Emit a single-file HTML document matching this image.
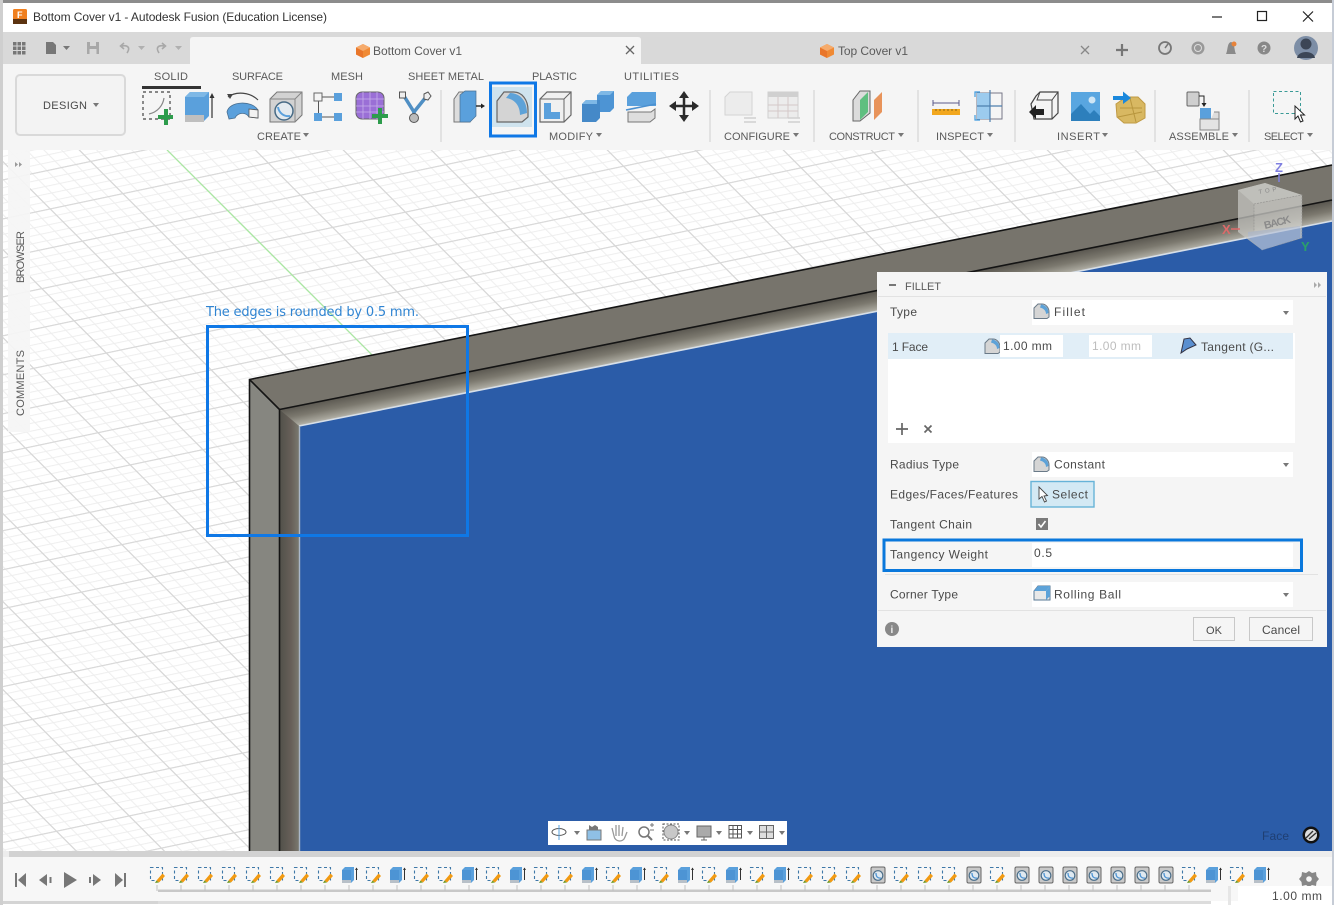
<!DOCTYPE html>
<html lang="en"><head><meta charset="utf-8"><title>Bottom Cover v1</title>
<style>
html,body{margin:0;padding:0;background:#fff;width:1334px;height:905px;overflow:hidden}
svg{display:block;font-family:"Liberation Sans",sans-serif;font-size:12px}
text{fill:#555}
.l{fill:#4a4a4a}
.t{fill:#5a5a5a}
.u{fill:#5a5a5a;font-size:11px}
</style></head><body>
<svg xmlns="http://www.w3.org/2000/svg" width="1334" height="905" viewBox="0 0 1334 905">
<defs>
<pattern id="gMaj" width="100" height="100" patternUnits="userSpaceOnUse" patternTransform="matrix(.727 -.153 .322 .322 121.7 193.3)">
<rect x="0" y="0" width="2" height="100" fill="#d8d8d8"/><rect x="0" y="0" width="100" height="3" fill="#d8d8d8"/>
</pattern>
<pattern id="gMin" width="20" height="20" patternUnits="userSpaceOnUse" patternTransform="matrix(.727 -.153 .322 .322 121.7 193.3)">
<rect x="0" y="0" width="1.6" height="20" fill="#eeeeee"/><rect x="0" y="0" width="20" height="2.6" fill="#eeeeee"/>
</pattern>
<linearGradient id="topF" gradientUnits="userSpaceOnUse" x1="279" y1="409" x2="283" y2="429.2"><stop offset="0" stop-color="#5a5750"/><stop offset=".5" stop-color="#7c796f"/><stop offset=".85" stop-color="#a3a197"/><stop offset="1" stop-color="#b9b7ae"/></linearGradient>
<linearGradient id="leftF" x1="0" y1="0" x2="1" y2="0"><stop offset="0" stop-color="#505049"/><stop offset=".6" stop-color="#675f58"/><stop offset="1" stop-color="#7a796f"/></linearGradient>
<symbol id="s" viewBox="0 0 18 20" width="18" height="20">
<rect x="1.500" y="2.500" width="12" height="13" fill="none" stroke="#3f78a8" stroke-width="1.100" stroke-dasharray="3 2.500"/>
<path d="M7.500 15.500 L13.500 8.500 L16 11 L10 17.500 Z" fill="#f29a12"/><path d="M6 18 L7.500 15.500 L10 17.500 Z" fill="#6f9a28"/>
</symbol>
<symbol id="e" viewBox="0 0 18 20" width="18" height="20">
<path d="M1 5 L4 2 H13 V15 L10 18 H1 Z" fill="#5aa0dc"/><path d="M1 15 H10 V18 H1Z" fill="#b8c0c8"/><path d="M1 5 H10 V15 H1Z" fill="#4d94d4"/><path d="M15.500 3 V15" stroke="#333" stroke-width="1"/><path d="M14 5 L15.500 2.500 L17 5Z" fill="#333"/>
</symbol>
<symbol id="r" viewBox="0 0 18 20" width="18" height="20">
<rect x="2" y="2" width="14" height="16" rx="1.500" fill="#c9c9c9" stroke="#666"/><circle cx="9" cy="10.500" r="4.800" fill="#dfe9f0" stroke="#4c6f8a" stroke-width="1.200"/><path d="M7 8 C7 12 9 13.500 12 13" fill="none" stroke="#4d94d4" stroke-width="1.300"/>
</symbol>
<symbol id="cube" viewBox="0 0 16 16" width="16" height="16">
<path d="M8 1 L15 4.500 V11.500 L8 15 L1 11.500 V4.500Z" fill="#f08a34"/><path d="M1 4.500 L8 8 V15 L1 11.500Z" fill="#e9762a"/><path d="M8 1 L15 4.500 L8 8 L1 4.500Z" fill="#f6ab6c"/>
</symbol>
<symbol id="fi" viewBox="0 0 17 17" width="17" height="17">
<path d="M1 15.500 V5 L5 1 H9 C13 1 16 5 16 9 V14 L14 15.500Z" fill="#d5d5d5" stroke="#6a7a88"/>
<path d="M8 1.500 C12.500 2 15.500 5 15.500 10 L13 11 C13 8 11 5.500 7 4.500Z" fill="#5da2d8"/>
</symbol>
</defs>

<!-- outer frame -->
<rect width="1334" height="905" fill="#fff"/>
<rect x="0" y="0" width="1334" height="3" fill="#8c8c8c"/>
<rect x="0" y="0" width="3" height="905" fill="#cfcfcf"/>
<rect x="1332" y="0" width="2" height="905" fill="#c6ccd6"/>

<!-- canvas grid -->
<rect x="3" y="150" width="1329" height="701" fill="#fff"/>
<rect x="3" y="150" width="1329" height="701" fill="url(#gMin)"/>
<rect x="3" y="150" width="1329" height="701" fill="url(#gMaj)"/>
<path d="M167 150 L372 355" stroke="#a8eaa0" stroke-width="1.200"/>

<!-- body -->
<path d="M250 380 L1332 165 V851 H250Z" fill="#77746c"/>
<path d="M250 380 L279 409 V851 H250Z" fill="#868680"/>
<path d="M279 409 L1332 200 V221 L299 426Z" fill="url(#topF)"/>
<path d="M279 409 L299 426 V851 H279Z" fill="url(#leftF)"/>
<path d="M299 426 L1332 221 V851 H299Z" fill="#2b5ca8"/>
<path d="M299 426 L1332 221" stroke="#d7dfe8" stroke-width="1.600" fill="none"/>
<path d="M299.500 426 V851" stroke="#aab7c8" stroke-width="1.400" fill="none"/>
<path d="M249.500 851 V379.500 L1332 165 M250 380 L279.500 409.500 V851 M279.500 409.500 L1332 200" stroke="#141414" stroke-width="1.600" fill="none"/>

<!-- annotation -->
<text x="206" y="316" font-size="14" textLength="213" style="fill:#2f84d2;font-family:'DejaVu Sans',sans-serif;font-size:13px">The edges is rounded by 0.5 mm.</text>
<rect x="207.500" y="326.500" width="260" height="209" fill="none" stroke="#0f78e6" stroke-width="3"/>

<!-- left panel -->
<rect x="8" y="150" width="22" height="282" fill="#f5f5f5" opacity=".92"/>
<path d="M15 162 L18 164.500 L15 167Z M19 162 L22 164.500 L19 167Z" fill="#9a9a9a"/>
<text transform="translate(24,283) rotate(-90)" textLength="52" class="u" x="0" y="0">BROWSER</text>
<text transform="translate(24,416) rotate(-90)" textLength="66" class="u" x="0" y="0">COMMENTS</text>

<!-- viewcube -->
<g opacity=".72">
<path d="M1238 190 L1265 183 L1302 195 V238 L1262 250 L1238 232Z" fill="#c8c8c4"/>
<path d="M1238 190 L1265 183 L1302 195 L1254 204Z" fill="#dcdcd8"/>
<path d="M1254 204 L1302 195 V238 L1262 250 L1254 240Z" fill="#d2d2ce" stroke="#999" stroke-width=".6" stroke-dasharray="2 1"/>
<path d="M1248 237 L1262 250 L1300 238 L1300 226 L1248 232Z" fill="#b9c4d8"/>
</g>
<text transform="translate(1265,229) rotate(-14)" textLength="27" x="0" y="0" style="fill:#8a8a8a;font-size:10.500px;font-weight:bold">BACK</text>
<text transform="translate(1259,194) rotate(-10)" font-size="6" textLength="18" x="0" y="0" style="fill:#888;font-size:6px">TOP</text>
<text x="1275" y="172" style="fill:#7f7fe0;font-weight:bold;font-size:13px">Z</text>
<text x="1222" y="234" style="fill:#dc6a6a;font-weight:bold;font-size:13px">X</text>
<path d="M1231 229 H1240" stroke="#dc6a6a" stroke-width="1.500"/>
<text x="1301" y="251" style="fill:#2aa06a;font-weight:bold;font-size:13px">Y</text>
<path d="M1279 173 V182" stroke="#7f7fe0" stroke-width="1.500"/>

<!-- title bar -->
<rect x="3" y="3" width="1329" height="29" fill="#fff"/>
<rect x="13" y="9" width="14" height="15" rx="1.500" fill="#f07f1e"/>
<rect x="13" y="19" width="14" height="5" fill="#5c3310"/>
<text x="17" y="18" style="fill:#fff;font-weight:bold;font-size:9px">F</text>
<text x="33" y="21" textLength="294" style="fill:#333">Bottom Cover v1 - Autodesk Fusion (Education License)</text>
<path d="M1212 17 H1222" stroke="#222" stroke-width="1.200"/>
<rect x="1257.500" y="11.500" width="9" height="9" fill="none" stroke="#222" stroke-width="1.200"/>
<path d="M1303 11.500 L1313 21.500 M1313 11.500 L1303 21.500" stroke="#222" stroke-width="1.200"/>

<!-- tab bar -->
<rect x="3" y="32" width="1329" height="32" fill="#d9d9d9"/>
<path d="M190 64 V40 Q190 37 193 37 H638 Q641 37 641 40 V64Z" fill="#f5f5f5"/>
<g fill="#777"><rect x="13" y="42" width="3.500" height="3.500"/><rect x="17.500" y="42" width="3.500" height="3.500"/><rect x="22" y="42" width="3.500" height="3.500"/><rect x="13" y="46.500" width="3.500" height="3.500"/><rect x="17.500" y="46.500" width="3.500" height="3.500"/><rect x="22" y="46.500" width="3.500" height="3.500"/><rect x="13" y="51" width="3.500" height="3.500"/><rect x="17.500" y="51" width="3.500" height="3.500"/><rect x="22" y="51" width="3.500" height="3.500"/></g>
<path d="M46 42 H53 L56 45 V54 H46Z" fill="#777"/><path d="M63 46 H70 L66.500 50Z" fill="#777"/>
<path d="M87 42 H99 V54 H87Z" fill="#a8a8a8"/><rect x="90" y="42" width="6" height="4" fill="#d9d9d9"/><rect x="89.500" y="49" width="7" height="5" fill="#d9d9d9"/>
<path d="M127 53 C131 47 127 45 122 46 M124 43 L120.500 46 L124 49" fill="none" stroke="#a8a8a8" stroke-width="1.600"/><path d="M138 46 H145 L141.500 50Z" fill="#b0b0b0"/>
<path d="M159 53 C155 47 159 45 164 46 M162 43 L165.500 46 L162 49" fill="none" stroke="#a8a8a8" stroke-width="1.600"/><path d="M175 46 H182 L178.500 50Z" fill="#b0b0b0"/>
<use href="#cube" x="355" y="43"/>
<text x="373" y="55" textLength="89" class="t">Bottom Cover v1</text>
<path d="M626 46 L634 54 M634 46 L626 54" stroke="#666" stroke-width="1.300"/>
<use href="#cube" x="819" y="43"/>
<text x="838" y="55" textLength="70" class="t">Top Cover v1</text>
<path d="M1081 46 L1089 54 M1089 46 L1081 54" stroke="#888" stroke-width="1.300"/>
<path d="M1122 44 V56 M1116 50 H1128" stroke="#777" stroke-width="2.200"/>
<circle cx="1165" cy="48" r="6" fill="none" stroke="#777" stroke-width="1.800"/><path d="M1165 48 L1168 44" stroke="#777" stroke-width="1.500"/>
<circle cx="1198" cy="48" r="6.500" fill="#999"/><circle cx="1198" cy="48" r="3.500" fill="none" stroke="#ddd"/>
<path d="M1226 54 C1228 50 1227 43 1231 42 C1235 43 1234 50 1236 54Z" fill="#8a8a8a"/><circle cx="1234" cy="44" r="2.500" fill="#e8833a"/>
<circle cx="1264" cy="48" r="6.500" fill="#888"/><text x="1261" y="52" style="fill:#ddd;font-weight:bold;font-size:10px">?</text>
<ellipse cx="1306" cy="48" rx="12" ry="12" fill="#7d8ea6"/><circle cx="1306" cy="44" r="5.500" fill="#3c4656"/><path d="M1297 58 C1298 50 1314 50 1315 58Z" fill="#3c4656"/>

<!-- toolbar -->
<rect x="3" y="64" width="1329" height="86" fill="#f5f5f5"/>
<rect x="16" y="75" width="109" height="60" rx="4" fill="#f3f3f3" stroke="#d9d9d9" stroke-width="2"/>
<text x="43" y="109" textLength="44" class="u" style="fill:#4a4a4a">DESIGN</text><path d="M93 103 H99 L96 107Z" fill="#777"/>
<text x="154" y="80" textLength="34" class="u">SOLID</text>
<rect x="142" y="86" width="59" height="3" fill="#333"/>
<text x="232" y="80" textLength="51" class="u">SURFACE</text>
<text x="331" y="80" textLength="32" class="u">MESH</text>
<text x="408" y="80" textLength="76" class="u">SHEET METAL</text>
<text x="532" y="80" textLength="45" class="u">PLASTIC</text>
<text x="624" y="80" textLength="55" class="u">UTILITIES</text>
<text x="257" y="140" textLength="44" class="u">CREATE</text><path d="M303 133 H309 L306 137Z" fill="#777"/>
<text x="549" y="140" textLength="44" class="u">MODIFY</text><path d="M596 133 H602 L599 137Z" fill="#777"/>
<text x="724" y="140" textLength="66" class="u">CONFIGURE</text><path d="M793 133 H799 L796 137Z" fill="#777"/>
<text x="829" y="140" textLength="66" class="u">CONSTRUCT</text><path d="M898 133 H904 L901 137Z" fill="#777"/>
<text x="936" y="140" textLength="48" class="u">INSPECT</text><path d="M987 133 H993 L990 137Z" fill="#777"/>
<text x="1057" y="140" textLength="43" class="u">INSERT</text><path d="M1102 133 H1108 L1105 137Z" fill="#777"/>
<text x="1169" y="140" textLength="60" class="u">ASSEMBLE</text><path d="M1232 133 H1238 L1235 137Z" fill="#777"/>
<text x="1264" y="140" textLength="40" class="u">SELECT</text><path d="M1307 133 H1313 L1310 137Z" fill="#777"/>
<g stroke="#dcdcdc" stroke-width="1.500"><path d="M441 90 V142 M710 90 V142 M814 90 V142 M918 90 V142 M1015 90 V142 M1155 90 V142 M1249 90 V142"/></g>

<!-- create sketch -->
<rect x="143" y="92" width="27" height="27" fill="none" stroke="#444" stroke-width="1.200" stroke-dasharray="3 3"/>
<path d="M149 114 C158 112 163 105 164 98" fill="none" stroke="#888" stroke-width="1.200"/>
<path d="M166 109 V125 M158 117 H173" stroke="#2d9c4c" stroke-width="4"/>
<!-- extrude -->
<path d="M185 97 L190 92 H209 V116 L204 121 H185Z" fill="#5aa0dc"/><path d="M190 92 H209 L204 97 H185Z" fill="#7eb8e6"/><rect x="185" y="115" width="19" height="7" fill="#bfbfbf"/><path d="M212 118 V95" stroke="#333" stroke-width="1.200"/><path d="M209.500 98 L212 93 L214.500 98Z" fill="#333"/>
<!-- revolve -->
<path d="M227 112 C229 101 252 100 258 110 L258 118 L249 117 C246 112 238 112 235 118 L229 119Z" fill="#5aa0dc" stroke="#4a6f90" stroke-width=".8"/><path d="M249 109 L258 110 L258 118 L249 117Z" fill="#f2f2f2" stroke="#555" stroke-width=".8"/><path d="M228 97 C236 91 250 92 258 100" fill="none" stroke="#444" stroke-width="1.200"/><path d="M227 94 L233 94 L230 99Z" fill="#444"/>
<!-- hole -->
<path d="M270 99 L277 92 H302 V115 L295 122 H270Z" fill="#d2d2d2" stroke="#777"/><path d="M270 99 H295 V122 M295 99 L302 92" fill="none" stroke="#888"/><circle cx="284" cy="111" r="9" fill="#e3eaef" stroke="#476a85" stroke-width="1.500"/><path d="M278 107 C279 113 284 117 290 116" fill="none" stroke="#5aa0dc" stroke-width="2"/>
<!-- form -->
<path d="M322 97 H334 M318.500 101 V113 M322 117 H334" stroke="#555" fill="none"/><rect x="314" y="93" width="8" height="8" fill="#f5f5f5" stroke="#666"/><rect x="334" y="93" width="8" height="8" fill="#5aa0dc"/><rect x="314" y="113" width="8" height="8" fill="#5aa0dc"/><rect x="334" y="113" width="8" height="8" fill="#5aa0dc"/>
<!-- mesh solid -->
<rect x="356" y="92" width="28" height="27" rx="6" fill="#9a6fd6" stroke="#666"/><path d="M356 106 H384 M370 92 V119 M363 92 V119 M377 92 V119 M356 99 H384 M356 112 H384" stroke="#c8b0ea" stroke-width=".8"/>
<path d="M380 108 V124 M372 116 H388" stroke="#2d9c4c" stroke-width="4"/>
<!-- y tool -->
<path d="M404 96 L414 112 L426 97" fill="none" stroke="#4f8fc4" stroke-width="3.500"/><path d="M414 110 V116" stroke="#4f8fc4" stroke-width="3.500"/><rect x="399.500" y="92" width="6" height="6" fill="#eee" stroke="#555"/><path d="M424 94 L428 92 L431 96 L428 100 L424 99Z" fill="#eee" stroke="#555"/><circle cx="414" cy="118" r="4.500" fill="#bbb" stroke="#555"/>
<!-- press pull -->
<path d="M454 99 L459 92 H470 V122 H454Z" fill="#ddd" stroke="#777"/><path d="M460 95 L465 91 H476 V116 L470 122 H460Z" fill="#5aa0dc" stroke="#4a6f90" stroke-width=".7"/><path d="M476 106 H483" stroke="#222" stroke-width="1.400"/><path d="M481 103.500 L485 106 L481 108.500Z" fill="#222"/>
<!-- fillet selected -->
<rect x="490.500" y="83" width="45" height="53" fill="#f5f5f5" stroke="#0f78e6" stroke-width="3"/>
<rect x="492" y="87" width="40" height="40" fill="#cfe3ee"/>
<path d="M497 122 V101 L504 92 H514 C522 92 528 100 528 110 V117 L522 122Z" fill="#d4d4d4" stroke="#666" stroke-width="1.200"/>
<path d="M510 93 C520 93 527 101 527 113 L520 115 C520 105 514 99 506 98Z" fill="#5da2d8"/>
<!-- chamfer/shell -->
<path d="M540 99 L547 92 H571 V115 L564 122 H540Z" fill="#f0f0f0" stroke="#666" stroke-width="1.200"/><path d="M540 99 H564 V122 M564 99 L571 92" fill="none" stroke="#666"/><path d="M544 103 H551 V112 H560 V119 H544Z" fill="#5aa0dc"/>
<!-- combine -->
<path d="M597 95 L601 91 H614 V108 L610 112 H597Z" fill="#4d94d4"/><path d="M597 95 L601 91 H614 L610 95Z" fill="#7eb8e6"/>
<path d="M582 104 L586 100 H600 V118 L596 122 H582Z" fill="#4589c8"/><path d="M582 104 L586 100 H597 L597 104Z" fill="#7eb8e6"/>
<!-- split -->
<path d="M627 97 L632 92 H656 V106 H627Z" fill="#5aa0dc"/><path d="M626 110 L656 104" stroke="#4a90d0" stroke-width="1.600"/><path d="M628 112 H651 L655 109 V118 L650 122 H628Z" fill="#dedede" stroke="#777"/>
<!-- move -->
<path d="M684 93 V119 M671 106 H697" stroke="#2b2b2b" stroke-width="2.500"/><path d="M684 91 L689 98 H679Z M684 122 L689 115 H679Z M669 106 L676 101 V111Z M699 106 L692 101 V111Z" fill="#2b2b2b"/>
<!-- configure faded -->
<path d="M725 97 L730 92 H752 V115 H725Z" fill="#ececec" stroke="#d4d4d4"/><path d="M744 118 H756 M744 122 H756" stroke="#d0d0d0" stroke-width="1.500"/>
<rect x="768" y="92" width="30" height="26" fill="#ececec" stroke="#d0d0d0"/><rect x="768" y="92" width="30" height="5" fill="#d0d0d0"/><path d="M778 97 V118 M788 97 V118 M768 105 H798 M768 111 H798" stroke="#d4c8c8"/><path d="M788 118 H800 M788 122 H800" stroke="#d0d0d0" stroke-width="1.500"/>
<!-- construct -->
<path d="M853 100 L860 91 H870 V113 L860 121 H853Z" fill="#dcdcdc" stroke="#666"/><path d="M860 100 L868 92 V112 L860 120Z" fill="#5fbf80"/><path d="M874 100 L882 92 V112 L874 120Z" fill="#e8935a"/>
<!-- inspect -->
<path d="M933 103 H959 M933 100 V106 M959 100 V106" stroke="#5a5a8a" stroke-width="1"/><rect x="932" y="109" width="28" height="6" fill="#f2a71e"/><path d="M936 109 V111 M940 109 V111 M944 109 V111 M948 109 V111 M952 109 V111 M956 109 V111" stroke="#8a6410"/>
<rect x="977" y="93" width="25" height="26" fill="#f5f5f5" stroke="#778"/><rect x="977" y="93" width="13" height="26" fill="#9ccbee"/><path d="M990 90 V122 M977 106 H1002" stroke="#4d7fae" stroke-width="1.200"/><path d="M975 97 V92 H980 M975 115 V120 H980" stroke="#3e9be0" fill="none" stroke-width="1.200"/>
<!-- insert -->
<path d="M1031 104 L1036 96 L1040 92 H1058 V113 L1052 119 H1034 Z" fill="#f4f4f4" stroke="#444" stroke-width="1.200"/><path d="M1040 92 L1037 100 H1052 V119 M1052 100 L1058 92" fill="none" stroke="#444"/><path d="M1029 112 L1036 105 V109 H1044 V115 H1036 V119Z" fill="#222"/>
<rect x="1071" y="92" width="29" height="29" fill="#59a6e0"/><path d="M1071 121 V114 L1081 104 L1090 114 L1094 110 L1100 116 V121Z" fill="#2d7fbc"/><circle cx="1092" cy="100" r="3.500" fill="#cfe6f5"/>
<path d="M1116 104 L1126 97 H1138 L1145 104 V118 L1136 123 H1124 L1117 117Z" fill="#d8b862" stroke="#c09a44"/><path d="M1120 108 L1142 108 M1118 117 L1142 112 M1130 98 L1136 122" stroke="#b8963e"/>
<path d="M1113 96 H1123 V91.500 L1131 98 L1123 104 V100 H1113Z" fill="#1a88dc"/>
<!-- assemble -->
<rect x="1187" y="92" width="12" height="14" rx="1" fill="#cfcfcf" stroke="#666"/><path d="M1199 96 H1204 V104" fill="none" stroke="#222"/><path d="M1201.500 103 H1206.500 L1204 107Z" fill="#222"/>
<rect x="1200" y="108" width="11" height="11" fill="#5aa0dc"/><rect x="1200" y="119" width="19" height="11" fill="#e4e4e4" stroke="#888"/><path d="M1211 119 L1219 119 L1219 112 L1214 112" fill="#ddd" stroke="#888"/>
<!-- select -->
<rect x="1273.500" y="91.500" width="27" height="22" fill="none" stroke="#3a9a96" stroke-dasharray="3 2.500"/>
<path d="M1295 106 L1295 119 L1298 116 L1300.500 122 L1303 121 L1300.500 115 L1304.500 115Z" fill="#fff" stroke="#222"/>

<!-- fillet dialog -->
<rect x="877" y="272" width="450" height="375" fill="#f5f5f5"/>
<rect x="889" y="284" width="7" height="2" fill="#777"/>
<text x="905" y="290" textLength="36" class="u">FILLET</text>
<path d="M1314 282 L1317 285 L1314 288Z M1318 282 L1321 285 L1318 288Z" fill="#aaa"/>
<path d="M878 296.500 H1326 M878 610.500 H1326 M885 574.500 H1318" stroke="#e2e2e2"/>

<text x="890" y="316" textLength="27" class="l">Type</text>
<rect x="1032" y="300" width="261" height="25" fill="#fff"/>
<use href="#fi" x="1033" y="303"/>
<text x="1054" y="316" textLength="31" class="l">Fillet</text>
<path d="M1283 311 H1289 L1286 315Z" fill="#777"/>

<rect x="888" y="333" width="407" height="110" fill="#fff"/>
<rect x="888" y="333" width="405" height="26" fill="#e1eef7"/>
<text x="892" y="351" textLength="36" class="l">1 Face</text>
<use href="#fi" x="984" y="338"/>
<rect x="1000" y="335" width="63" height="22" fill="#fff"/>
<text x="1003" y="350" textLength="49" class="l">1.00 mm</text>
<rect x="1089" y="335" width="63" height="22" fill="#fff"/>
<text x="1092" y="350" textLength="49" style="fill:#bdbdbd">1.00 mm</text>
<path d="M1181 353 L1184 339 L1190 338 L1196 345 L1187 349Z" fill="#5a8fd0" stroke="#334" stroke-width="1"/>
<text x="1201" y="351" textLength="73" class="l">Tangent (G...</text>
<path d="M902 423 V435 M896 429 H908" stroke="#666" stroke-width="1.700"/>
<path d="M924.500 425.500 L931.500 432.500 M931.500 425.500 L924.500 432.500" stroke="#666" stroke-width="1.700"/>

<text x="890" y="468.500" textLength="69" class="l">Radius Type</text>
<rect x="1032" y="452" width="261" height="25" fill="#fff"/>
<use href="#fi" x="1033" y="456"/>
<text x="1054" y="468.500" textLength="51" class="l">Constant</text>
<path d="M1283 463 H1289 L1286 467Z" fill="#777"/>

<text x="890" y="498.500" textLength="128" class="l">Edges/Faces/Features</text>
<rect x="1031" y="481.500" width="63" height="25.500" fill="#d3e9f4" stroke="#67b3d8" stroke-width="1.400"/>
<path d="M1039 487 L1039 499 L1042 496.500 L1044.500 502 L1046.500 501 L1044 496 L1047.500 495.500Z" fill="#fff" stroke="#444" stroke-width=".9"/>
<text x="1052" y="498.500" textLength="36" class="l">Select</text>

<text x="890" y="528.500" textLength="82" class="l">Tangent Chain</text>
<rect x="1036" y="518" width="12" height="12" fill="#7a7a7a"/>
<path d="M1038.500 524 L1041 527 L1045.500 521" fill="none" stroke="#fff" stroke-width="1.600"/>

<text x="890" y="558.500" textLength="98" class="l">Tangency Weight</text>
<rect x="1032" y="543" width="261" height="24" fill="#fff"/>
<text x="1034" y="557" textLength="18" class="l">0.5</text>
<rect x="884" y="540" width="417.500" height="30.500" fill="none" stroke="#0a78dc" stroke-width="3"/>

<text x="890" y="598.500" textLength="68" class="l">Corner Type</text>
<rect x="1032" y="582" width="261" height="25" fill="#fff"/>
<path d="M1034 591 L1038 586 H1050 V600 H1034Z" fill="#e8e8e8" stroke="#5a7a96"/><path d="M1038 586 H1050 L1046 591 H1034Z" fill="#5da2d8"/><path d="M1046 591 V600 L1050 596 V586Z" fill="#5da2d8"/>
<text x="1054" y="598.500" textLength="67" class="l">Rolling Ball</text>
<path d="M1283 593 H1289 L1286 597Z" fill="#777"/>

<circle cx="892" cy="629" r="7" fill="#888"/><text x="890.500" y="633" style="fill:#eee;font-weight:bold;font-size:10px">i</text>
<rect x="1193.500" y="617.500" width="41" height="23" fill="#f5f5f5" stroke="#c8c8c8"/>
<text x="1206" y="634" textLength="16" class="u" style="fill:#4a4a4a">OK</text>
<rect x="1249.500" y="617.500" width="63" height="23" fill="#f5f5f5" stroke="#c8c8c8"/>
<text x="1262" y="634" textLength="38" class="l">Cancel</text>

<!-- face label -->
<text x="1262" y="840" textLength="27" style="fill:#1f3f73">Face</text>
<circle cx="1311" cy="835" r="8.500" fill="#111"/><circle cx="1311" cy="835" r="6" fill="#ddd"/><path d="M1306 838 L1313 831 M1309 839 L1316 833" stroke="#333" stroke-width="1.400"/>

<!-- nav bar -->
<rect x="548" y="821" width="239" height="24" fill="#fff"/>
<ellipse cx="559" cy="832" rx="7" ry="3.500" fill="none" stroke="#555"/><path d="M559 825 V840" stroke="#5aa0dc"/><path d="M574 831 H580 L577 835Z" fill="#777"/>
<rect x="587" y="830" width="14" height="10" fill="#8fc0e6" stroke="#777"/><path d="M589 830 V825 L592 827 L595 825 L598 827 V830" fill="#777"/>
<path d="M614 836 L612 828 M616 836 V825 M619 836 V825 M622 836 L623 827 M625 837 L627 832 M614 836 C615 842 623 843 625 837" fill="none" stroke="#999" stroke-width="1.300"/>
<circle cx="644" cy="832" r="5" fill="none" stroke="#777" stroke-width="1.500"/><path d="M648 836 L652 840" stroke="#777" stroke-width="2"/><path d="M650 825 H654 M652 823 V827 M650 830 H654" stroke="#777"/>
<rect x="663" y="824" width="16" height="16" fill="none" stroke="#555" stroke-dasharray="2 1.500"/><circle cx="671" cy="832" r="7" fill="#c8c8c8" stroke="#888"/><path d="M684 831 H690 L687 835Z" fill="#777"/>
<rect x="697" y="826" width="14" height="11" fill="#aaa" stroke="#666"/><path d="M701 840 H707 M704 837 V840" stroke="#666"/><path d="M716 831 H722 L719 835Z" fill="#777"/>
<path d="M729 825.500 H741.500 V838 H729Z M733 825.500 V838 M737.500 825.500 V838 M729 829.500 H741.500 M729 834 H741.500" fill="none" stroke="#555"/><path d="M747 831 H753 L750 835Z" fill="#777"/>
<rect x="759.500" y="825.500" width="14" height="13" fill="#ddd" stroke="#666"/><path d="M759.500 832 H773.500 M766.500 825.500 V838.500" stroke="#666"/><path d="M779 831 H785 L782 835Z" fill="#777"/>

<!-- timeline -->
<rect x="3" y="851" width="1329" height="6" fill="#ededed"/>
<rect x="9" y="851" width="1011" height="6" fill="#d2d2d2"/>
<rect x="3" y="857" width="1329" height="44" fill="#f7f7f7"/>
<rect x="3" y="901" width="155" height="3" fill="#d4d4d4"/>
<rect x="158" y="901" width="1053" height="3" fill="#dcdcdc"/>
<g fill="#777">
<rect x="15" y="873" width="2" height="14"/><path d="M26 873 V887 L18 880Z"/>
<path d="M47 874 V886 L39 880Z"/><rect x="49.500" y="877" width="2" height="6"/>
<path d="M64 872 L77 880 L64 888Z"/>
<rect x="89" y="877" width="2" height="6"/><path d="M93 874 V886 L101 880Z"/>
<path d="M115 873 V887 L123 880Z"/><rect x="124" y="873" width="2" height="14"/>
</g>
<rect x="158" y="889.500" width="1053" height="2.500" fill="#c8c8c8"/>
<g stroke="#c0c0c0" stroke-width="1"><path d="M157 885 V891 M181 885 V891 M205 885 V891 M229 885 V891 M253 885 V891 M277 885 V891 M301 885 V891 M325 885 V891 M349 885 V891 M373 885 V891 M397 885 V891 M421 885 V891 M445 885 V891 M469 885 V891 M493 885 V891 M517 885 V891 M541 885 V891 M565 885 V891 M589 885 V891 M613 885 V891 M637 885 V891 M661 885 V891 M685 885 V891 M709 885 V891 M733 885 V891 M757 885 V891 M781 885 V891 M805 885 V891 M829 885 V891 M853 885 V891 M877 885 V891 M901 885 V891 M925 885 V891 M949 885 V891 M973 885 V891 M997 885 V891 M1021 885 V891 M1045 885 V891 M1069 885 V891 M1093 885 V891 M1117 885 V891 M1141 885 V891 M1165 885 V891 M1189 885 V891"/></g>
<g transform="translate(0,865)">
<use href="#s" x="149"/><use href="#s" x="173"/><use href="#s" x="197"/><use href="#s" x="221"/><use href="#s" x="245"/><use href="#s" x="269"/><use href="#s" x="293"/><use href="#s" x="317"/>
<use href="#e" x="341"/><use href="#s" x="365"/><use href="#e" x="389"/><use href="#s" x="413"/><use href="#s" x="437"/><use href="#e" x="461"/><use href="#s" x="485"/><use href="#e" x="509"/>
<use href="#s" x="533"/><use href="#s" x="557"/><use href="#e" x="581"/><use href="#s" x="605"/><use href="#e" x="629"/><use href="#s" x="653"/><use href="#e" x="677"/><use href="#s" x="701"/>
<use href="#e" x="725"/><use href="#s" x="749"/><use href="#e" x="773"/><use href="#s" x="797"/><use href="#s" x="821"/><use href="#s" x="845"/><use href="#r" x="869"/><use href="#s" x="893"/>
<use href="#s" x="917"/><use href="#s" x="941"/><use href="#r" x="965"/><use href="#s" x="989"/><use href="#r" x="1013"/><use href="#r" x="1037"/><use href="#r" x="1061"/><use href="#r" x="1085"/>
<use href="#r" x="1109"/><use href="#r" x="1133"/><use href="#r" x="1157"/><use href="#s" x="1181"/><use href="#e" x="1205"/><use href="#s" x="1229"/><use href="#e" x="1253"/>
</g>
<path d="M1309 871 L1312 873 L1316 872 L1316.500 876 L1319 879 L1316.500 882 L1316 886 L1312 885 L1309 887 L1306 885 L1302 886 L1301.500 882 L1299 879 L1301.500 876 L1302 872 L1306 873Z" fill="#888"/><circle cx="1309" cy="879" r="2.800" fill="#f7f7f7"/>
<rect x="1238" y="886" width="94" height="19" fill="#fff"/>
<rect x="1228" y="886" width="3" height="19" fill="#e6e6e6"/>
<text x="1272" y="900" textLength="50" class="l">1.00 mm</text>
</svg>
</body></html>
